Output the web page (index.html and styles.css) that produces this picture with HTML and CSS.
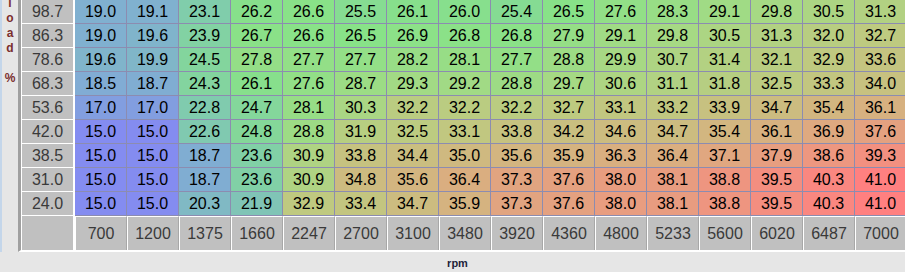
FILE: index.html
```html
<!DOCTYPE html>
<html>
<head>
<meta charset="utf-8">
<link rel="stylesheet" href="styles.css">
</head>
<body>
<div class="screen">
  <div class="ylabel"><span>l</span><span>o</span><span>a</span><span>d</span><span>&nbsp;</span><span>%</span></div>
  <div class="panel">
    <div class="grid" id="grid">
      <div class="yh">98.7</div><div class="v">19.0</div><div class="v">19.1</div><div class="v">23.1</div><div class="v">26.2</div><div class="v">26.6</div><div class="v">25.5</div><div class="v">26.1</div><div class="v">26.0</div><div class="v">25.4</div><div class="v">26.5</div><div class="v">27.6</div><div class="v">28.3</div><div class="v">29.1</div><div class="v">29.8</div><div class="v">30.5</div><div class="v">31.3</div>
      <div class="yh">86.3</div><div class="v">19.0</div><div class="v">19.6</div><div class="v">23.9</div><div class="v">26.7</div><div class="v">26.6</div><div class="v">26.5</div><div class="v">26.9</div><div class="v">26.8</div><div class="v">26.8</div><div class="v">27.9</div><div class="v">29.1</div><div class="v">29.8</div><div class="v">30.5</div><div class="v">31.3</div><div class="v">32.0</div><div class="v">32.7</div>
      <div class="yh">78.6</div><div class="v">19.6</div><div class="v">19.9</div><div class="v">24.5</div><div class="v">27.8</div><div class="v">27.7</div><div class="v">27.7</div><div class="v">28.2</div><div class="v">28.1</div><div class="v">27.7</div><div class="v">28.8</div><div class="v">29.9</div><div class="v">30.7</div><div class="v">31.4</div><div class="v">32.1</div><div class="v">32.9</div><div class="v">33.6</div>
      <div class="yh">68.3</div><div class="v">18.5</div><div class="v">18.7</div><div class="v">24.3</div><div class="v">26.1</div><div class="v">27.6</div><div class="v">28.7</div><div class="v">29.3</div><div class="v">29.2</div><div class="v">28.8</div><div class="v">29.7</div><div class="v">30.6</div><div class="v">31.1</div><div class="v">31.8</div><div class="v">32.5</div><div class="v">33.3</div><div class="v">34.0</div>
      <div class="yh">53.6</div><div class="v">17.0</div><div class="v">17.0</div><div class="v">22.8</div><div class="v">24.7</div><div class="v">28.1</div><div class="v">30.3</div><div class="v">32.2</div><div class="v">32.2</div><div class="v">32.2</div><div class="v">32.7</div><div class="v">33.1</div><div class="v">33.2</div><div class="v">33.9</div><div class="v">34.7</div><div class="v">35.4</div><div class="v">36.1</div>
      <div class="yh">42.0</div><div class="v">15.0</div><div class="v">15.0</div><div class="v">22.6</div><div class="v">24.8</div><div class="v">28.8</div><div class="v">31.9</div><div class="v">32.5</div><div class="v">33.1</div><div class="v">33.8</div><div class="v">34.2</div><div class="v">34.6</div><div class="v">34.7</div><div class="v">35.4</div><div class="v">36.1</div><div class="v">36.9</div><div class="v">37.6</div>
      <div class="yh">38.5</div><div class="v">15.0</div><div class="v">15.0</div><div class="v">18.7</div><div class="v">23.6</div><div class="v">30.9</div><div class="v">33.8</div><div class="v">34.4</div><div class="v">35.0</div><div class="v">35.6</div><div class="v">35.9</div><div class="v">36.3</div><div class="v">36.4</div><div class="v">37.1</div><div class="v">37.9</div><div class="v">38.6</div><div class="v">39.3</div>
      <div class="yh">31.0</div><div class="v">15.0</div><div class="v">15.0</div><div class="v">18.7</div><div class="v">23.6</div><div class="v">30.9</div><div class="v">34.8</div><div class="v">35.6</div><div class="v">36.4</div><div class="v">37.3</div><div class="v">37.6</div><div class="v">38.0</div><div class="v">38.1</div><div class="v">38.8</div><div class="v">39.5</div><div class="v">40.3</div><div class="v">41.0</div>
      <div class="yh">24.0</div><div class="v">15.0</div><div class="v">15.0</div><div class="v">20.3</div><div class="v">21.9</div><div class="v">32.9</div><div class="v">33.4</div><div class="v">34.7</div><div class="v">35.9</div><div class="v">37.3</div><div class="v">37.6</div><div class="v">38.0</div><div class="v">38.1</div><div class="v">38.8</div><div class="v">39.5</div><div class="v">40.3</div><div class="v">41.0</div>
      <div class="corner"></div><div class="xh">700</div><div class="xh">1200</div><div class="xh">1375</div><div class="xh">1660</div><div class="xh">2247</div><div class="xh">2700</div><div class="xh">3100</div><div class="xh">3480</div><div class="xh">3920</div><div class="xh">4360</div><div class="xh">4800</div><div class="xh">5233</div><div class="xh">5600</div><div class="xh">6020</div><div class="xh">6487</div><div class="xh">7000</div>
    </div>
  </div>
  <div class="spacer"></div>
  <div class="xlabel">rpm</div>
</div>
<script src="script.js"></script>
</body>
</html>
```

FILE: styles.css
```css
html, body {
  margin: 0;
  padding: 0;
}
body {
  background: #e6e6e6;
  width: 905px;
  height: 272px;
  overflow: hidden;
  font-family: "Liberation Sans", Arial, sans-serif;
}
.screen {
  display: grid;
  grid-template-columns: 18px 887px;
  grid-template-rows: 252px 20px;
}
.ylabel {
  box-sizing: border-box;
  border-left: 2px solid #c4d6ea;
  display: flex;
  flex-direction: column;
  align-items: center;
  margin-top: -4px;
  color: #7a2e2e;
  font-weight: bold;
  font-size: 12px;
  line-height: 15px;
}
.panel {
  box-sizing: border-box;
  height: 252px;
  border-left: 3px solid #a0a0a0;
  border-bottom: 2px solid #ffffff;
  overflow: hidden;
}
.grid {
  display: grid;
  grid-template-columns: 54px repeat(16, 52px);
  grid-template-rows: repeat(9, 24px) 34px;
  width: max-content;
  font-size: 16px;
}
.grid > div {
  box-sizing: border-box;
  display: flex;
  align-items: center;
  justify-content: center;
}
.yh {
  background: #c0c0c0;
  color: #3a3a3a;
  border-left: 1px solid #ffffff;
  border-right: 2px solid #ffffff;
  border-bottom: 1px solid #ffffff;
}
.v {
  color: #000000;
  border-right: 1px solid #8c8cb0;
  border-bottom: 1px solid #8c8cb0;
}
.corner {
  background: #c0c0c0;
  border-left: 1px solid #ffffff;
  border-right: 2px solid #ffffff;
}
.xh {
  background: #c0c0c0;
  color: #3a3a3a;
  border-top: 1px solid #ffffff;
  border-left: 1px solid #ffffff;
  border-right: 1px solid #a8a8a8;
}
.xlabel {
  display: flex;
  align-items: center;
  justify-content: center;
  padding-right: 8px;
  padding-top: 2px;
  font-size: 11px;
  font-weight: bold;
  color: #1e1e3a;
}
```

FILE: script.js
```js
(function () {
  var stops = [
    [15, [132, 140, 240]],
    [19, [128, 176, 208]],
    [23, [128, 204, 172]],
    [26.5, [136, 226, 136]],
    [30, [168, 216, 132]],
    [33, [192, 200, 128]],
    [36, [214, 178, 128]],
    [38.5, [236, 152, 128]],
    [41, [255, 128, 128]]
  ];
  function color(v) {
    if (v <= stops[0][0]) return stops[0][1];
    for (var i = 1; i < stops.length; i++) {
      if (v <= stops[i][0]) {
        var a = stops[i - 1], b = stops[i];
        var s = (v - a[0]) / (b[0] - a[0]);
        return [0, 1, 2].map(function (k) { return Math.round(a[1][k] + (b[1][k] - a[1][k]) * s); });
      }
    }
    return stops[stops.length - 1][1];
  }
  document.querySelectorAll('.grid .v').forEach(function (c) {
    c.style.backgroundColor = 'rgb(' + color(parseFloat(c.textContent)).join(',') + ')';
  });
})();
```
